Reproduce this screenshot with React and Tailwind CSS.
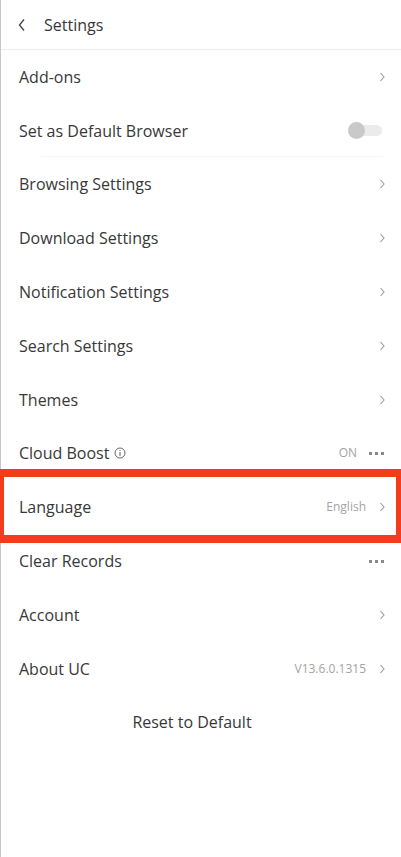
import React from "react";

const Chevron = () => (
    <svg width="8" height="12" viewBox="0 0 8 12" className="ml-2">
        <path d="M2.5 2 L6 6 L2.5 10" fill="none" stroke="#9a9a9a" strokeWidth="1.1" />
    </svg>
);

const Dots = () => (
    <span className="flex gap-[3px] ml-2 mr-[2px]">
        <span className="w-[3px] h-[3px] bg-[#8a8a8a]" />
        <span className="w-[3px] h-[3px] bg-[#8a8a8a]" />
        <span className="w-[3px] h-[3px] bg-[#8a8a8a]" />
    </span>
);

const Row = ({ label, value, right, extra }) => (
    <div className="h-[53.8px] flex items-center pl-[18px] pr-[15px]">
        <span className="text-[16px] text-[#383838]">{label}</span>
        {extra}
        <div className="ml-auto flex items-center">
            {value && <span className="text-[12px] text-[#a3a3a3] mr-1">{value}</span>}
            {right}
        </div>
    </div>
);

const App = () => {
    return (
        <div
            className="w-[401px] h-[857px] bg-white border-l border-[#c8c8c8] relative"
            style={{ fontFamily: "'Open Sans', Lato, sans-serif" }}
        >
            <div className="h-[50px] flex items-center pl-[16px] border-b border-[#ececec]">
                <svg width="10" height="16" viewBox="0 0 10 16">
                    <path d="M7 2.5 L2.5 8 L7 13.5" fill="none" stroke="#444" strokeWidth="1.3" />
                </svg>
                <span className="ml-[17px] text-[16px] text-[#383838]">Settings</span>
            </div>
            <Row label="Add-ons" right={<Chevron />} />
            <div className="relative">
                <Row
                    label="Set as Default Browser"
                    right={
                        <span className="relative w-[34px] h-[16px] flex items-center mr-[4px]">
                            <span className="absolute left-[8px] right-0 h-[11px] rounded-full bg-[#ebebeb]" />
                            <span className="relative w-[17px] h-[17px] rounded-full bg-[#c9c9c9]" />
                        </span>
                    }
                />
                <div className="absolute left-[40px] right-[18px] bottom-[1px] h-px bg-[#f5f5f5]" />
            </div>
            <Row label="Browsing Settings" right={<Chevron />} />
            <Row label="Download Settings" right={<Chevron />} />
            <Row label="Notification Settings" right={<Chevron />} />
            <Row label="Search Settings" right={<Chevron />} />
            <Row label="Themes" right={<Chevron />} />
            <Row
                label="Cloud Boost"
                extra={
                    <svg width="12" height="12" viewBox="0 0 12 12" className="ml-[5px]">
                        <circle cx="6" cy="6" r="5" fill="none" stroke="#555" strokeWidth="0.9" />
                        <path d="M6 5.2 V8.8" stroke="#555" strokeWidth="1" />
                        <circle cx="6" cy="3.6" r="0.6" fill="#555" />
                    </svg>
                }
                value="ON"
                right={<Dots />}
            />
            <div className="relative">
                <Row label="Language" value="English" right={<Chevron />} />
                <div className="absolute left-[-1px] right-0 top-[-11px] bottom-[-9px] border-[#f23d1c] border-l-[4px] border-r-[5px] border-t-[8px] border-b-[8px]" />
            </div>
            <Row label="Clear Records" right={<Dots />} />
            <Row label="Account" right={<Chevron />} />
            <Row label="About UC" value="V13.6.0.1315" right={<Chevron />} />
            <div className="h-[53.8px] flex items-center justify-center">
                <span className="text-[16px] text-[#383838] -ml-[18px]">Reset to Default</span>
            </div>
        </div>
    );
};

export default App;
